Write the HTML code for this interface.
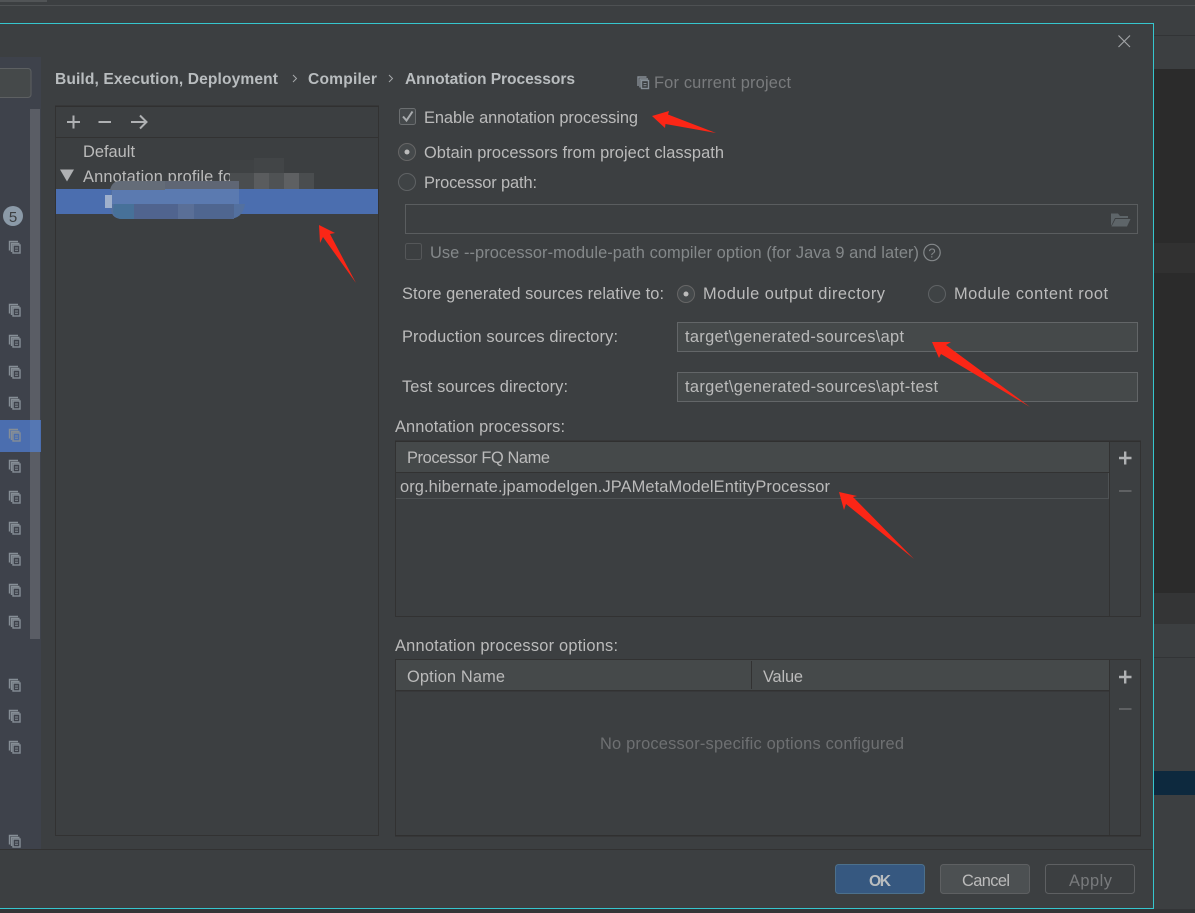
<!DOCTYPE html>
<html><head><meta charset="utf-8"><title>Annotation Processors</title>
<style>
html,body{margin:0;padding:0;background:#3c3f41;overflow:hidden}
svg{display:block}
text{font-family:"Liberation Sans","Noto Sans CJK SC",sans-serif;font-size:16.4px;fill:#bbbbbb}
.b{font-weight:bold;fill:#b9bdbf;font-size:15.6px}
.d{fill:#84888a}
.e{fill:#6e7072}
.g{fill:#797b7d}
</style></head><body>
<svg width="1195" height="913" viewBox="0 0 1195 913" xmlns="http://www.w3.org/2000/svg">
<defs>
<g id="c" fill="none" stroke="#868e96" stroke-width="1.4">
<path d="M-4.500 3.500V-5.500H4"/><path d="M-2.500 5V-3.500H5.500"/>
<rect x="-1" y="-2" width="7" height="8"/>
<path d="M1 1H4M1 3.200H4" stroke-width="1"/>
</g>
</defs>

<!-- background IDE -->
<rect width="1195" height="913" fill="#3c3f41"/>
<rect x="0" y="0" width="47" height="2" fill="#515456"/>
<rect y="5" width="1195" height="1" fill="#4e5153"/>
<rect x="1154" y="35" width="41" height="1" fill="#323436"/>
<rect x="1154" y="36" width="41" height="33" fill="#3c3f41"/>
<rect x="1154" y="69" width="41" height="174" fill="#2b2b2b"/>
<rect x="1154" y="243" width="41" height="30" fill="#313131"/>
<rect x="1154" y="273" width="41" height="320" fill="#2b2b2b"/>
<rect x="1154" y="593" width="41" height="31" fill="#343536"/>
<rect x="1154" y="657" width="41" height="1" fill="#323436"/>
<rect x="1154" y="771" width="41" height="24" fill="#0d293e"/>
<rect y="909" width="1195" height="4" fill="#333537"/>

<!-- dialog -->
<rect x="0" y="23" width="1153.500" height="885.500" fill="#3c3f41"/>
<path d="M0 23.500H1153.500V908.500H0" fill="none" stroke="#36c6ce" stroke-width="1"/>
<path d="M1118.500 35.500L1130 47M1130 35.500L1118.500 47" stroke="#a0a3a5" stroke-width="1.200" fill="none"/>

<!-- sidebar -->
<rect x="0" y="57" width="41" height="792" fill="#3e424b"/>
<rect x="-4" y="68.500" width="35" height="29" rx="3" fill="#45494a" stroke="#5d6062"/>
<rect x="30" y="109" width="10" height="530" fill="#5a5d65"/>
<rect x="0" y="420" width="41" height="32" fill="#4b6eaf"/>
<rect x="30" y="420" width="10" height="32" fill="#5577b3"/>
<circle cx="13" cy="216" r="10" fill="#8b9aa8"/>
<text x="13" y="222" text-anchor="middle" style="fill:#3c3f41;font-size:15px">5</text>
<use href="#c" x="14" y="247"/><use href="#c" x="14" y="310"/><use href="#c" x="14" y="341"/><use href="#c" x="14" y="372"/>
<use href="#c" x="14" y="403"/><use href="#c" x="14" y="435"/><use href="#c" x="14" y="466"/><use href="#c" x="14" y="497"/>
<use href="#c" x="14" y="528"/><use href="#c" x="14" y="559"/><use href="#c" x="14" y="590"/><use href="#c" x="14" y="622"/>
<use href="#c" x="14" y="685"/><use href="#c" x="14" y="716"/><use href="#c" x="14" y="747"/><use href="#c" x="14" y="841"/>

<rect x="0" y="849" width="1153" height="1" fill="#323232"/>

<!-- breadcrumb -->
<text class="b" x="55" y="84" textLength="223" lengthAdjust="spacing">Build, Execution, Deployment</text>
<path d="M293 75l3.500 3.500l-3.500 3.500M389 75l3.500 3.500l-3.500 3.500" fill="none" stroke="#a5a8aa"/>
<text class="b" x="308" y="84" textLength="69" lengthAdjust="spacing">Compiler</text>
<text class="b" x="405" y="84" textLength="170" lengthAdjust="spacing">Annotation Processors</text>
<use href="#c" x="642.500" y="82.500"/>
<text class="g" x="654" y="88" textLength="137" lengthAdjust="spacing">For current project</text>

<!-- left panel -->
<rect x="55.500" y="106.500" width="323" height="729" fill="#3c3f41" stroke="#323232"/>
<rect x="55" y="105.500" width="324" height="1" fill="#2f2f2f"/>
<rect x="56" y="137" width="322" height="1" fill="#323232"/>
<path d="M67 122H80M73.500 115.500V128.500" stroke="#afb1b3" stroke-width="2" fill="none"/>
<path d="M98.500 122H111" stroke="#afb1b3" stroke-width="2" fill="none"/>
<path d="M131 122H146M140 115.500L146.500 122L140 128.500" stroke="#afb1b3" stroke-width="2" fill="none"/>
<text x="83" y="157" textLength="52" lengthAdjust="spacing">Default</text>
<path d="M60 169.500H74L67 181.500Z" fill="#afb1b3"/>
<text x="83" y="182" textLength="149" lengthAdjust="spacing">Annotation profile fo</text>
<rect x="56" y="189" width="322" height="25" fill="#4b6eaf"/>
<!-- mosaic -->
<rect x="230" y="173" width="84" height="16" fill="#4a4d4f"/>
<rect x="254" y="173" width="15" height="16" fill="#5a5c5e"/>
<rect x="284" y="173" width="15" height="16" fill="#5e6062"/>
<rect x="269" y="173" width="15" height="16" fill="#4f5254"/>
<rect x="230" y="160" width="24" height="13" fill="#3f4244"/>
<rect x="254" y="158" width="30" height="15" fill="#424547"/>
<!-- blurred smear -->
<path d="M122 181H239V204H245Q243 219 228 219H122Q110 219 110 204Q110 181 122 181Z" fill="#53709f"/>
<rect x="112" y="189" width="127" height="15" fill="#5b7ab0"/>
<path d="M120 181H165V190H110Q112 181 120 181Z" fill="#646c78"/>
<path d="M165 181H239V189H165Z" fill="#5f6674"/>
<path d="M114 204H134V219H122Q115 219 113 212Z" fill="#477199"/>
<rect x="134" y="204" width="44" height="15" fill="#50648f"/>
<rect x="178" y="204" width="16" height="15" fill="#5a6f97"/>
<rect x="194" y="204" width="40" height="15" fill="#4f6690"/>
<rect x="105" y="195" width="7" height="13" fill="#9fb0cc"/>

<!-- right top -->
<rect x="399.500" y="108.500" width="16" height="16" rx="2" fill="#45494b" stroke="#6b6e70"/>
<path d="M403 116.500L406.500 120.500L412.500 111.500" fill="none" stroke="#a9acae" stroke-width="2"/>
<text x="424" y="123" textLength="214" lengthAdjust="spacing">Enable annotation processing</text>
<circle cx="407" cy="152" r="8.500" fill="#45494b" stroke="#666"/>
<circle cx="407" cy="152" r="2.500" fill="#bbb"/>
<text x="424" y="158" textLength="300" lengthAdjust="spacing">Obtain processors from project classpath</text>
<circle cx="407" cy="182" r="8.500" fill="#3f4345" stroke="#5f6264"/>
<text x="424" y="188" textLength="113" lengthAdjust="spacing">Processor path:</text>
<rect x="405.500" y="204.500" width="732" height="29" fill="#3c3f41" stroke="#5a5d5f"/>
<path d="M1111 215.500V213.500H1118L1120 216H1128V218H1115L1111 226ZM1115.500 219H1130.500L1127 226.500H1111.500Z" fill="#5e6569"/>
<rect x="405.500" y="243.500" width="16" height="16" rx="2" fill="#3c3f41" stroke="#555759"/>
<text class="d" x="430" y="258" textLength="489" lengthAdjust="spacing">Use --processor-module-path compiler option (for Java 9 and later)</text>
<circle cx="932" cy="252.500" r="8.200" fill="none" stroke="#84888a" stroke-width="1.200"/>
<text class="d" x="932" y="257.500" text-anchor="middle" style="font-size:13px">?</text>

<text x="402" y="299" textLength="262" lengthAdjust="spacing">Store generated sources relative to:</text>
<circle cx="686" cy="294" r="8.500" fill="#45494b" stroke="#666"/>
<circle cx="686" cy="294" r="2.500" fill="#bbb"/>
<text x="703" y="299" textLength="182" lengthAdjust="spacing">Module output directory</text>
<circle cx="937" cy="294" r="8.500" fill="#3f4345" stroke="#5f6264"/>
<text x="954" y="299" textLength="154" lengthAdjust="spacing">Module content root</text>

<text x="402" y="342" textLength="216" lengthAdjust="spacing">Production sources directory:</text>
<rect x="677.500" y="322.500" width="460" height="29" fill="#45494a" stroke="#636668"/>
<text x="685" y="342" textLength="219" lengthAdjust="spacing">target\generated-sources\apt</text>
<text x="402" y="392" textLength="166" lengthAdjust="spacing">Test sources directory:</text>
<rect x="677.500" y="372.500" width="460" height="29" fill="#45494a" stroke="#636668"/>
<text x="685" y="392" textLength="253" lengthAdjust="spacing">target\generated-sources\apt-test</text>

<!-- table 1 -->
<text x="395" y="432" textLength="170" lengthAdjust="spacing">Annotation processors:</text>
<rect x="395.500" y="441.500" width="745" height="175" fill="#3c3f41" stroke="#323232"/>
<rect x="395" y="440.500" width="746" height="1" fill="#2f2f2f"/>
<rect x="396" y="442" width="713" height="30" fill="#45494a"/>
<rect x="396" y="472" width="713" height="1" fill="#323232"/>
<rect x="396" y="498" width="713" height="1" fill="#4e5254"/>
<rect x="1108" y="473" width="1" height="26" fill="#4e5254"/>
<rect x="1109" y="442" width="1" height="174" fill="#323232"/>
<text x="407" y="463" textLength="143" lengthAdjust="spacing">Processor FQ Name</text>
<text x="400" y="492" textLength="430" lengthAdjust="spacing">org.hibernate.jpamodelgen.JPAMetaModelEntityProcessor</text>
<path d="M1119 458H1131.500M1125.200 451.500V464.500" stroke="#afb1b3" stroke-width="2.400" fill="none"/>
<path d="M1119 491H1131.500" stroke="#5f6163" stroke-width="2" fill="none"/>

<!-- table 2 -->
<text x="395" y="651" textLength="223" lengthAdjust="spacing">Annotation processor options:</text>
<rect x="395.500" y="659.500" width="745" height="176" fill="#3c3f41" stroke="#323232"/>
<rect x="395" y="835.500" width="746" height="1" fill="#2f2f2f"/>
<rect x="396" y="660" width="713" height="30" fill="#45494a"/>
<rect x="396" y="690" width="713" height="1.500" fill="#323232"/>
<rect x="751" y="661" width="1" height="28" fill="#323232"/>
<rect x="1109" y="660" width="1" height="175" fill="#323232"/>
<text x="407" y="682" textLength="98" lengthAdjust="spacing">Option Name</text>
<text x="763" y="682" textLength="40" lengthAdjust="spacing">Value</text>
<path d="M1119 677H1131.500M1125.200 670.500V683.500" stroke="#afb1b3" stroke-width="2.400" fill="none"/>
<path d="M1119 709H1131.500" stroke="#5f6163" stroke-width="2" fill="none"/>
<text class="e" x="600" y="749" textLength="304" lengthAdjust="spacing">No processor-specific options configured</text>

<!-- buttons -->
<rect x="835.500" y="864.500" width="89" height="29" rx="3" fill="#365880" stroke="#4c708c"/>
<text class="b" x="869" y="886" textLength="22" lengthAdjust="spacing">OK</text>
<rect x="940.500" y="864.500" width="89" height="29" rx="3" fill="#4c5052" stroke="#5e6062"/>
<text x="962" y="886" textLength="48" lengthAdjust="spacing">Cancel</text>
<rect x="1045.500" y="864.500" width="89" height="29" rx="3" fill="#3c3f41" stroke="#5e6062"/>
<text class="g" x="1069" y="886" textLength="43" lengthAdjust="spacing">Apply</text>

<!-- red arrows -->
<g fill="#fb2616">
<polygon points="652,116 669,111 668,114.500 716,133 665.500,124 665,128"/>
<polygon points="319,225 335,233 330,234 356,283 323,237 320,243"/>
<polygon points="932,342 951,342 946,345 1030,407 941,354 939,358"/>
<polygon points="839,492 857,496 853,497 914,559 846,504 844,510"/>
</g>
</svg>
</body></html>
